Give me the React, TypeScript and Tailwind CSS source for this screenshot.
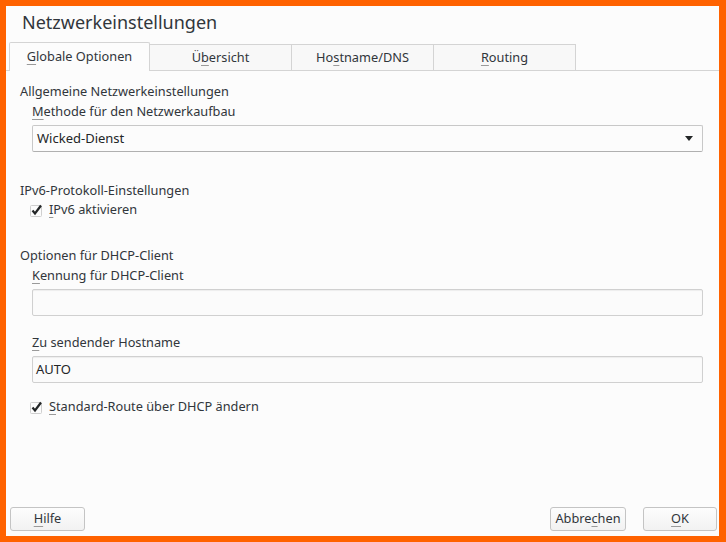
import React from "react";

const font = { fontFamily: '"Noto Sans", "Open Sans", sans-serif' };

function M({ children }: { children: React.ReactNode }) {
  return (
    <span className="underline decoration-[#9a9a9a] underline-offset-[3px]">
      {children}
    </span>
  );
}

function Check({ label }: { label: React.ReactNode }) {
  return (
    <div className="flex items-center h-[20px] pl-[10px] text-[12.75px] text-[#31363b]">
      <svg width="14" height="14" viewBox="0 0 14 14" className="mr-[5px]">
        <rect x="0.5" y="2.5" width="11" height="11" rx="1" fill="#fcfcfc" stroke="#cfcfcf" />
        <path d="M2.5 7.5 L5 10.5 L11 2.5" fill="none" stroke="#232627" strokeWidth="2.2" />
      </svg>
      <span>{label}</span>
    </div>
  );
}

function Tab({ children, active }: { children: React.ReactNode; active?: boolean }) {
  return active ? (
    <div className="w-[141px] h-[29px] flex items-center justify-center bg-[#fcfcfc] border border-b-0 border-[#d4d4d4] rounded-t-[2px] text-[12.75px] text-[#31363b]">
      {children}
    </div>
  ) : (
    <div className="w-[142px] h-[27px] flex items-center justify-center bg-[#f8f8f8] border-t border-r border-b border-[#d4d4d4] text-[12.75px] text-[#31363b]">
      {children}
    </div>
  );
}

function Field({ value }: { value?: string }) {
  return (
    <div className="ml-[26px] mr-[16px] h-[27px] border border-[#d0d0d0] rounded-[2px] bg-[#fbfbfb] flex items-center px-[3px] text-[13px] text-[#232627] shadow-[inset_0_1px_1px_rgba(0,0,0,0.06)]">
      {value}
    </div>
  );
}

function Btn({ children, w }: { children: React.ReactNode; w: string }) {
  return (
    <div className={`${w} h-[24px] border border-[#c4c4c4] rounded-[3px] bg-gradient-to-b from-[#fdfdfd] to-[#f2f2f2] flex items-center justify-center text-[12.75px] text-[#31363b]`}>
      {children}
    </div>
  );
}

export default function App() {
  return (
    <div className="w-[726px] h-[542px] bg-[#ff6200] pt-[6px] pl-[6px] pr-[7px] pb-[6px]" style={font}>
      <div className="w-full h-full bg-[#fcfcfc] flex flex-col">
        <div className="h-[36px] pl-[16px] pt-[4px] text-[18px] text-[#31363b] leading-[24px]">
          Netzwerkeinstellungen
        </div>
        <div className="flex items-end h-[29px] border-b border-[#d4d4d4] pl-[3px]">
          <div className="mb-[-1px] flex items-end">
            <Tab active>
              <span><M>G</M>lobale Optionen</span>
            </Tab>
            <Tab>
              <span>Ü<M>b</M>ersicht</span>
            </Tab>
            <Tab>
              <span>Ho<M>s</M>tname/DNS</span>
            </Tab>
            <Tab>
              <span><M>R</M>outing</span>
            </Tab>
          </div>
        </div>

        <div className="flex flex-col pl-[14px] pt-[10px] text-[12.75px] text-[#31363b]">
          <div className="h-[20px] leading-[20px]">Allgemeine Netzwerkeinstellungen</div>
          <div className="h-[20px] leading-[20px] pl-[12px]">
            <M>M</M>ethode für den Netzwerkaufbau
          </div>
          <div className="mt-[4px] ml-[12px] mr-[16px] h-[27px] border border-[#c8c8c8] border-b-[#b0b0b0] rounded-[2px] bg-[#fcfcfc] flex items-center justify-between pl-[4px] pr-[9px] text-[13px] text-[#232627]">
            <span>Wicked-Dienst</span>
            <svg width="8" height="5" viewBox="0 0 8 5">
              <path d="M0 0 H8 L4 5 Z" fill="#232627" />
            </svg>
          </div>

          <div className="mt-[28px] h-[20px] leading-[20px]">IPv6-Protokoll-Einstellungen</div>
          <Check label={<span><M>I</M>Pv6 aktivieren</span>} />

          <div className="mt-[25px] h-[20px] leading-[20px]">Optionen für DHCP-Client</div>
          <div className="h-[20px] leading-[20px] pl-[12px]">
            <M>K</M>ennung für DHCP-Client
          </div>
          <div className="mt-[4px] -ml-[14px]">
            <Field />
          </div>
          <div className="mt-[16px] h-[20px] leading-[20px] pl-[12px]">
            <M>Z</M>u sendender Hostname
          </div>
          <div className="mt-[4px] -ml-[14px]">
            <Field value="AUTO" />
          </div>
          <div className="mt-[14px]">
            <Check label={<span><M>S</M>tandard-Route über DHCP ändern</span>} />
          </div>
        </div>

        <div className="mt-auto mb-[5px] flex items-center pl-[4px] pr-[2px]">
          <Btn w="w-[75px]">
            <span><M>H</M>ilfe</span>
          </Btn>
          <div className="flex-1" />
          <Btn w="w-[76px]">
            <span>Abbre<M>c</M>hen</span>
          </Btn>
          <div className="w-[17px]" />
          <Btn w="w-[74px]">
            <span><M>O</M>K</span>
          </Btn>
        </div>
      </div>
    </div>
  );
}
